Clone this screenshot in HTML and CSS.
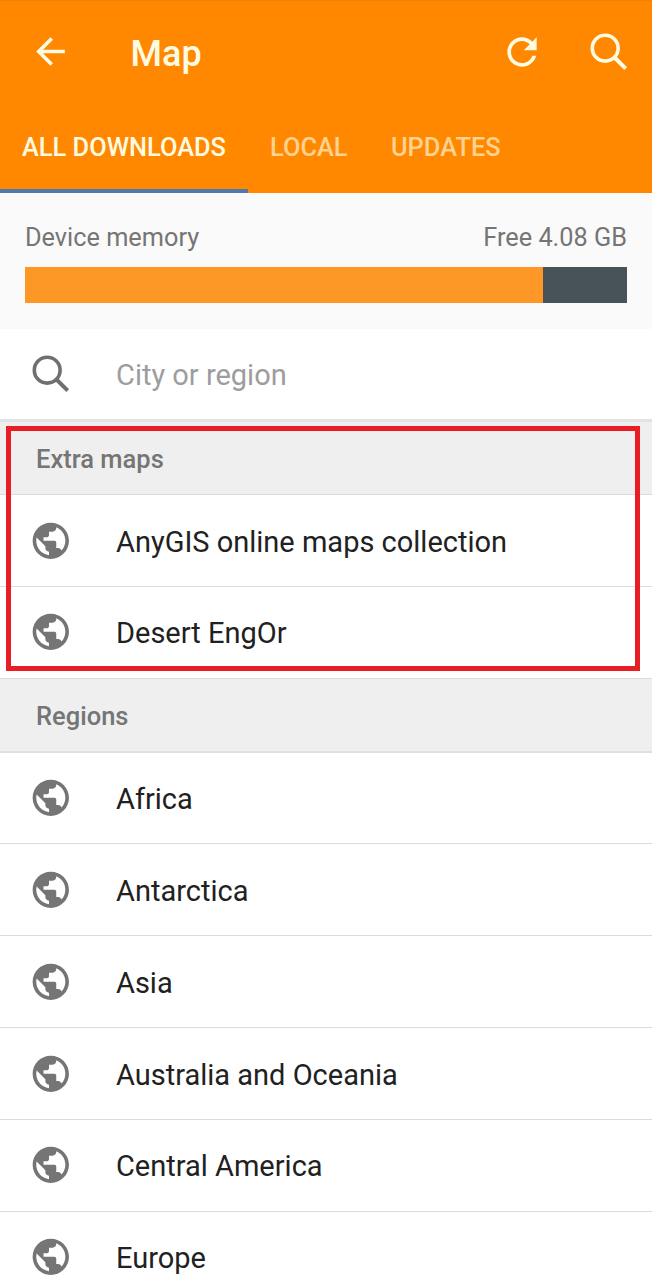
FILE: index.html
```html
<!DOCTYPE html>
<html lang="en">
<head>
<meta charset="utf-8">
<title>Map</title>
<link rel="stylesheet" href="styles.css">
</head>
<body>
<svg class="defs" width="0" height="0" aria-hidden="true">
  <symbol id="globe" viewBox="0 0 24 24"><path d="M12 2C6.48 2 2 6.48 2 12s4.48 10 10 10 10-4.48 10-10S17.52 2 12 2zm-1 17.93c-3.95-.49-7-3.85-7-7.93 0-.62.08-1.21.21-1.79L9 15v1c0 1.1.9 2 2 2v1.93zm6.9-2.54c-.26-.81-1-1.39-1.9-1.39h-1v-3c0-.55-.45-1-1-1H8v-2h2c.55 0 1-.45 1-1V7h2c1.1 0 2-.9 2-2v-.41c2.93 1.19 5 4.06 5 7.41 0 2.08-.8 3.97-2.1 5.39z"/></symbol>
  <symbol id="search" viewBox="0 0 38 38"><circle cx="15.2" cy="15.2" r="12.9" fill="none" stroke="currentColor" stroke-width="3.6"/><path d="M24.5 24.5L35.7 35.7" fill="none" stroke="currentColor" stroke-width="4"/></symbol>
</svg>
<div class="app">
  <header class="header">
    <div class="toolbar">
      <svg class="back" viewBox="0 0 24 24"><path d="M20 11H7.83l5.59-5.59L12 4l-8 8 8 8 1.41-1.41L7.83 13H20v-2z"/></svg>
      <h1 class="title">Map</h1>
      <svg class="refresh" viewBox="0 0 24 24"><path d="M17.65 6.35C16.2 4.9 14.21 4 12 4c-4.42 0-7.99 3.58-7.99 8s3.57 8 7.99 8c3.73 0 6.84-2.55 7.73-6h-2.08c-.82 2.33-3.04 4-5.65 4-3.31 0-6-2.69-6-6s2.69-6 6-6c1.66 0 3.14.69 4.22 1.78L13 11h7V4l-2.35 2.35z"/></svg>
      <svg class="search"><use href="#search"/></svg>
    </div>
    <nav class="tabs">
      <span class="tab tab-active">ALL DOWNLOADS</span>
      <span class="tab tab-local">LOCAL</span>
      <span class="tab tab-updates">UPDATES</span>
    </nav>
  </header>
  <section class="memory">
    <div class="memory-labels"><span>Device memory</span><span class="free">Free 4.08 GB</span></div>
    <div class="bar"><div class="used"></div></div>
  </section>
  <div class="find"><svg class="search"><use href="#search"/></svg><span class="hint">City or region</span></div>
  <h2 class="group group-extra">Extra maps</h2>
  <ul class="list">
    <li class="row"><svg class="globe"><use href="#globe"/></svg><span>AnyGIS online maps collection</span></li>
    <li class="row"><svg class="globe"><use href="#globe"/></svg><span>Desert EngOr</span></li>
  </ul>
  <h2 class="group group-regions">Regions</h2>
  <ul class="list">
    <li class="row"><svg class="globe"><use href="#globe"/></svg><span>Africa</span></li>
    <li class="row"><svg class="globe"><use href="#globe"/></svg><span>Antarctica</span></li>
    <li class="row"><svg class="globe"><use href="#globe"/></svg><span>Asia</span></li>
    <li class="row"><svg class="globe"><use href="#globe"/></svg><span>Australia and Oceania</span></li>
    <li class="row"><svg class="globe"><use href="#globe"/></svg><span>Central America</span></li>
    <li class="row"><svg class="globe"><use href="#globe"/></svg><span>Europe</span></li>
  </ul>
  <div class="highlight"></div>
</div>
</body>
</html>
```
FILE: styles.css
```css
* { box-sizing: border-box; margin: 0; padding: 0; }
body { font-family: Roboto, "Liberation Sans", sans-serif; background: #fff; }
.defs { position: absolute; }
.app { position: relative; width: 652px; height: 1280px; overflow: hidden; }
svg { flex: none; fill: currentColor; }
.header { height: 193px; background: #ff8800; color: #fffbe3; border-top: 1px solid #ec8407; }
.toolbar { display: flex; align-items: center; height: 101px; padding-left: 29px; }
.back { width: 43px; height: 43px; }
.title { margin-left: 58.5px; padding-top: 4px; font-size: 36px; font-weight: 500; line-height: 42px; }
.refresh { width: 44px; height: 44px; margin-left: auto; }
.search { width: 38px; height: 38px; }
.toolbar .search { margin: 0 24px 0 46px; }
.tabs { display: flex; height: 91px; font-size: 25.4px; font-weight: 500; line-height: 90px; }
.tab { white-space: nowrap; color: #ffd28f; }
.tab-active { width: 247.5px; padding-left: 22px; color: #fffbe3; border-bottom: 4px solid #5078b0; }
.tab-local { margin-left: 22.5px; width: 121px; }
.memory { height: 136px; padding: 28px 25px 0; background: #fafafa; color: #757575; }
.memory-labels { display: flex; justify-content: space-between; height: 46px; font-size: 25.3px; line-height: 33px; }
.bar { width: 602px; height: 36px; background: #485359; }
.used { width: 518px; height: 36px; background: #fd9827; }
.find { display: flex; align-items: center; height: 90px; padding-left: 32px; color: #707070; }
.hint { margin-left: 46px; padding-top: 2px; font-size: 29px; color: #9d9d9d; }
.group { height: 73px; padding-left: 36px; background: #efefef; color: #757575; font-size: 25.5px; font-weight: 500; border-bottom: 1px solid #dadada; }
.group-extra { height: 76px; border-top: 3px solid #e3e3e3; line-height: 74px; }
.group-regions { height: 74px; border-bottom: 2px solid #e0e0e0; line-height: 75px; }
.list { list-style: none; }
.row { display: flex; align-items: center; height: 91.8px; padding-left: 29px; border-bottom: 1px solid #dcdcdc; color: #212121; font-size: 29px; }
.row span { margin-left: 43px; padding-top: 2.6px; }
.globe { width: 43.6px; height: 43.6px; margin-right: 0.4px; color: #757575; }
.highlight { position: absolute; left: 6px; top: 426px; width: 634px; height: 245px; border: 5px solid #e81e26; }
```
